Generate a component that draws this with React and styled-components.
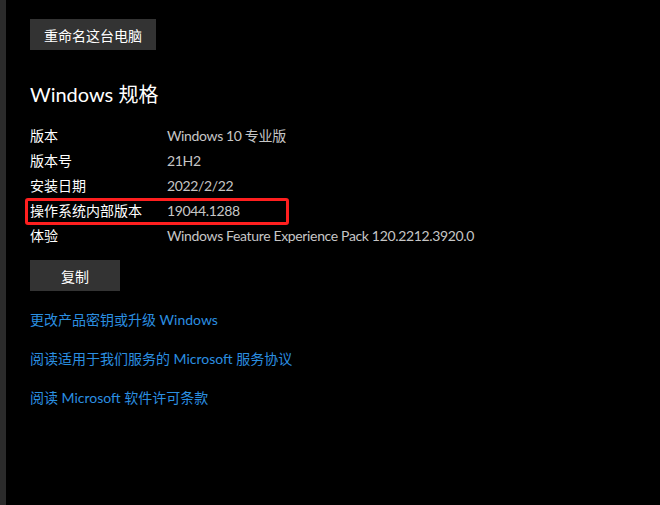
import React from "react";
import styled, { createGlobalStyle } from "styled-components";

const FONT = `Lato, "Noto Sans CJK SC", sans-serif`;

const Global = createGlobalStyle`
  html, body { margin: 0; padding: 0; background: #000; }
  body { font-family: ${FONT}; }
`;

const Page = styled.div`
  display: flex;
  width: 660px;
  height: 505px;
  background: #000;
  overflow: hidden;
`;

const SideStrip = styled.div`
  width: 6px;
  flex: none;
  background: #2b2b2b;
`;

const Content = styled.div`
  display: flex;
  flex-direction: column;
  align-items: flex-start;
  padding: 19px 0 0 24px;
`;

const Button = styled.button`
  display: flex;
  align-items: center;
  justify-content: center;
  height: 31px;
  width: ${(p) => p.$w}px;
  padding: 0;
  border: none;
  background: #333333;
  color: #fff;
  font-family: ${FONT};
  font-size: 14px;
  margin-top: ${(p) => p.$mt || 0}px;
`;

const Title = styled.h2`
  margin: 30px 0 0 0;
  font-weight: 400;
  font-size: 20px;
  line-height: 28px;
  color: #fff;
  font-family: ${FONT};
`;

const Specs = styled.div`
  display: grid;
  grid-template-columns: 137px auto;
  margin-top: 15px;
`;

const Row = styled.div`
  display: contents;
`;

const Label = styled.div`
  position: relative;
  font-size: 14px;
  line-height: 25px;
  color: #fff;
`;

const Value = styled.div`
  font-size: 14px;
  line-height: 25px;
  color: #c6c6c6;
  letter-spacing: -0.35px;
  white-space: nowrap;
`;

const Highlight = styled.div`
  position: absolute;
  left: -5px;
  top: 0px;
  width: 258px;
  height: 21px;
  border: 3px solid #ff1f1f;
  border-radius: 3px;
  pointer-events: none;
`;

const Links = styled.div`
  display: flex;
  flex-direction: column;
  gap: 19px;
  margin-top: 19px;
`;

const Link = styled.a`
  font-size: 14px;
  line-height: 20px;
  color: #2b8fe0;
  text-decoration: none;
`;

const specs = [
  ["版本", "Windows 10 专业版"],
  ["版本号", "21H2"],
  ["安装日期", "2022/2/22"],
  ["操作系统内部版本", "19044.1288", true],
  ["体验", "Windows Feature Experience Pack 120.2212.3920.0"],
];

export default function App() {
  return (
    <>
      <Global />
      <Page>
        <SideStrip />
        <Content>
          <Button $w={126}>重命名这台电脑</Button>
          <Title>Windows 规格</Title>
          <Specs>
            {specs.map(([k, v, hl]) => (
              <Row key={k}>
                <Label>
                  {k}
                  {hl && <Highlight />}
                </Label>
                <Value>{v}</Value>
              </Row>
            ))}
          </Specs>
          <Button $w={90} $mt={12}>复制</Button>
          <Links>
            <Link href="#">更改产品密钥或升级 Windows</Link>
            <Link href="#">阅读适用于我们服务的 Microsoft 服务协议</Link>
            <Link href="#">阅读 Microsoft 软件许可条款</Link>
          </Links>
        </Content>
      </Page>
    </>
  );
}
